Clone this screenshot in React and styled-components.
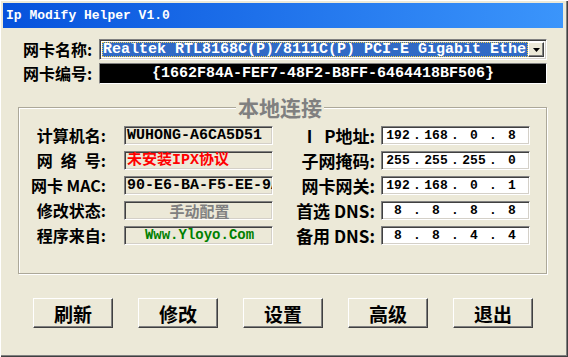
import React from 'react';
import styled, { createGlobalStyle } from 'styled-components';

const GlobalStyle = createGlobalStyle`
  html, body {
    margin: 0;
    padding: 0;
    background: #ece9d8;
  }
  * {
    box-sizing: border-box;
  }
`;

const cjk = `"Noto Sans CJK SC", "Noto Sans", sans-serif`;
const mono = `"Liberation Mono", "Noto Sans CJK SC", monospace`;

const Window = styled.div`
  width: 568px;
  height: 357px;
  background: #ece9d8;
  box-shadow: inset 1px 1px 0 #fff, inset -1px -1px 0 #404040, inset -2px -2px 0 #808080;
  display: flex;
  flex-direction: column;
  overflow: hidden;
`;

const TitleBar = styled.div`
  height: 25px;
  margin: 3px 5px 0 3px;
  padding-left: 3px;
  display: flex;
  align-items: center;
  background: linear-gradient(to right, #0652dc, #3b95fb);
`;

const Title = styled.span`
  font-family: ${mono};
  font-weight: 700;
  font-size: 13px;
  color: #fff;
  white-space: pre;
`;

const AdapterGrid = styled.div`
  display: grid;
  grid-template-columns: 76px 448px;
  grid-auto-rows: 21px;
  row-gap: 3px;
  align-items: center;
  margin: 11px 0 0 23px;
`;

const TopLabel = styled.span`
  font-family: ${cjk};
  font-weight: 700;
  font-size: 16px;
  line-height: 21px;
  color: #000;
  white-space: pre;
`;

const Combo = styled.div`
  height: 21px;
  display: flex;
  padding: 2px;
  background: #fff;
  border: 1px solid;
  border-color: #808080 #fff #fff #808080;
  box-shadow: inset 1px 1px 0 #404040, inset -1px -1px 0 #d4d0c8;
`;

const Selection = styled.div`
  flex: 1;
  min-width: 0;
  overflow: hidden;
  background: #316ac5;
  border: 1px dotted #f3cf4a;
  font-family: ${mono};
  font-weight: 700;
  font-size: 15px;
  line-height: 13px;
  color: #fff;
  white-space: pre;
`;

const DropButton = styled.div`
  width: 16px;
  flex: none;
  display: flex;
  align-items: center;
  justify-content: center;
  background: #ece9d8;
  border: 1px solid;
  border-color: #fff #404040 #404040 #fff;
  box-shadow: inset -1px -1px 0 #808080;
`;

const GuidBox = styled.div`
  height: 21px;
  background: #000;
  border: 1px solid;
  border-color: #808080 #fff #fff #808080;
  display: flex;
  align-items: center;
  justify-content: center;
  font-family: ${mono};
  font-weight: 700;
  font-size: 15px;
  color: #fff;
  white-space: pre;
`;

const Group = styled.fieldset`
  margin: 11px 21px 0 18px;
  padding: 7px 16px 28px 11px;
  min-width: 0;
  border: 1px solid #aca899;
  box-shadow: 1px 1px 0 #fff, inset 1px 1px 0 #fff;
`;

const Legend = styled.legend`
  margin: 0 auto;
  padding: 0 2px;
  background: #ece9d8;
  font-family: ${cjk};
  font-weight: 700;
  font-size: 21px;
  line-height: 24px;
  color: #808080;
`;

const FieldGrid = styled.div`
  display: grid;
  grid-template-columns: 94px 149px 108px 149px;
  grid-auto-rows: 19px;
  row-gap: 6px;
  align-items: center;
`;

const FieldLabel = styled.span`
  text-align: right;
  padding-right: ${({ $pad }) => $pad}px;
  font-family: ${cjk};
  font-weight: 700;
  font-size: ${({ $size }) => $size}px;
  line-height: 19px;
  color: #000;
  white-space: pre;
`;

const Sunken = styled.div`
  height: 19px;
  display: flex;
  align-items: center;
  overflow: hidden;
  border: 1px solid;
  border-color: #808080 #fff #fff #808080;
  box-shadow: inset 1px 1px 0 #404040, inset -1px -1px 0 #d4d0c8;
`;

const InfoBox = styled(Sunken)`
  background: #ece9d8;
  padding-left: 2px;
  justify-content: ${({ $center }) => ($center ? 'center' : 'flex-start')};
  font-family: ${({ $cjk }) => ($cjk ? cjk : mono)};
  font-weight: 700;
  font-size: ${({ $size }) => $size || 15}px;
  line-height: 17px;
  color: ${({ $color }) => $color || '#000'};
  white-space: pre;
`;

const IpField = styled(Sunken)`
  background: #fff;
  padding-left: 1px;
`;

const IpPart = styled.span`
  width: 30px;
  flex: none;
  text-align: center;
  font-family: ${mono};
  font-weight: 700;
  font-size: 13px;
  color: #000;
`;

const IpDot = styled(IpPart)`
  width: 8px;
`;

const ButtonRow = styled.div`
  display: flex;
  gap: 25px;
  margin: 24px 0 0 33px;
`;

const Button = styled.button`
  width: 80px;
  height: 30px;
  padding: 0;
  background: #ece9d8;
  border: 1px solid;
  border-color: #fff #404040 #404040 #fff;
  box-shadow: inset -1px -1px 0 #808080;
  font-family: ${cjk};
  font-weight: 700;
  font-size: 19px;
  color: #000;
`;

const IpBox = ({ parts }) => (
  <IpField>
    {parts.map((part, i) => (
      <React.Fragment key={i}>
        {i > 0 && <IpDot>.</IpDot>}
        <IpPart>{part}</IpPart>
      </React.Fragment>
    ))}
  </IpField>
);

const rows = [
  {
    left: '计算机名:',
    info: { text: 'WUHONG-A6CA5D51' },
    right: 'I\u2002\u2009P地址:',
    ip: ['192', '168', '0', '8'],
  },
  {
    left: '网\u2002络\u2002号:',
    info: { text: '未安装IPX协议', color: '#ff0000' },
    right: '子网掩码:',
    ip: ['255', '255', '255', '0'],
  },
  {
    left: '网卡 MAC:',
    info: { text: '90-E6-BA-F5-EE-9A' },
    right: '网卡网关:',
    ip: ['192', '168', '0', '1'],
  },
  {
    left: '修改状态:',
    info: { text: '手动配置', color: '#808080', center: true, cjk: true, size: 15 },
    right: '首选 DNS:',
    ip: ['8', '8', '8', '8'],
  },
  {
    left: '程序来自:',
    info: { text: 'Www.Yloyo.Com', color: '#008000', center: true, size: 14 },
    right: '备用 DNS:',
    ip: ['8', '8', '4', '4'],
  },
];

const buttons = ['刷新', '修改', '设置', '高级', '退出'];

const App = () => (
  <>
    <GlobalStyle />
    <Window>
      <TitleBar>
        <Title>Ip Modify Helper V1.0</Title>
      </TitleBar>

      <AdapterGrid>
        <TopLabel>网卡名称:</TopLabel>
        <Combo>
          <Selection>Realtek RTL8168C(P)/8111C(P) PCI-E Gigabit Ethernet NIC</Selection>
          <DropButton>
            <svg width="7" height="4" viewBox="0 0 7 4">
              <path d="M0 0h7L3.5 4z" fill="#000" />
            </svg>
          </DropButton>
        </Combo>
        <TopLabel>网卡编号:</TopLabel>
        <GuidBox>{'{1662F84A-FEF7-48F2-B8FF-6464418BF506}'}</GuidBox>
      </AdapterGrid>

      <Group>
        <Legend>本地连接</Legend>
        <FieldGrid>
          {rows.map((row) => (
            <React.Fragment key={row.left}>
              <FieldLabel $pad={18} $size={16}>{row.left}</FieldLabel>
              <InfoBox
                $color={row.info.color}
                $center={row.info.center}
                $size={row.info.size}
                $cjk={row.info.cjk}
              >
                {row.info.text}
              </InfoBox>
              <FieldLabel $pad={6} $size={17}>{row.right}</FieldLabel>
              <IpBox parts={row.ip} />
            </React.Fragment>
          ))}
        </FieldGrid>
      </Group>

      <ButtonRow>
        {buttons.map((label) => (
          <Button key={label}>{label}</Button>
        ))}
      </ButtonRow>
    </Window>
  </>
);

export default App;
